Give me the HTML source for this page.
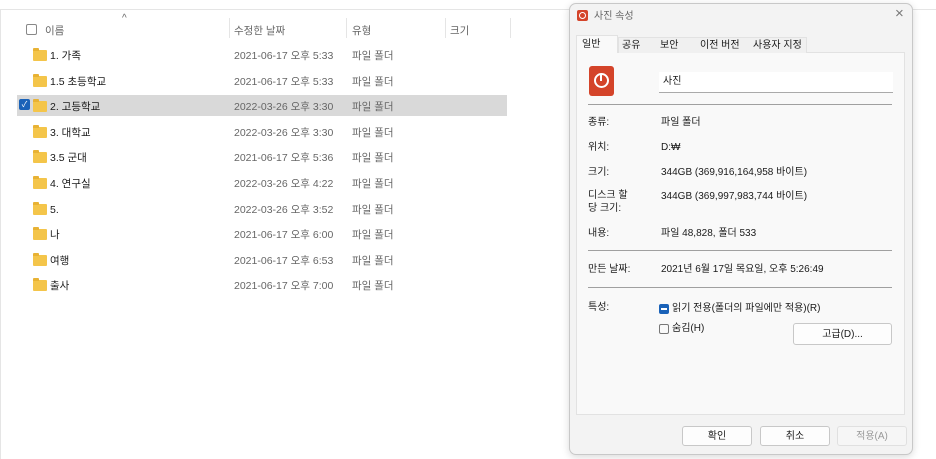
<!DOCTYPE html>
<html><head><meta charset="utf-8"><style>
*{margin:0;padding:0;box-sizing:border-box}
body{width:936px;height:459px;background:#fff;position:relative;overflow:hidden;font-family:"Liberation Sans","Noto Sans CJK KR",sans-serif;font-size:10.5px;color:#1a1a1a}
.a{position:absolute;white-space:nowrap;line-height:18px}
.g{color:#666}
.d{font-size:10px}
.fold{position:absolute;width:14px;height:11px;background:#f4c54a;border-radius:1px}
.fold:before{content:"";position:absolute;left:0;top:-2px;width:6px;height:3px;background:#e8b234;border-radius:1px 1px 0 0}
.vl{position:absolute;top:18px;width:1px;height:20px;background:#e5e5e5}
.sep{position:absolute;left:588px;width:304px;height:1px;background:#a0a0a0}
.btn{position:absolute;height:20px;border:1px solid #c8c8c8;border-radius:3px;background:#fdfdfd;text-align:center;line-height:19px;font-size:10px}
</style></head><body>
<div class="a" style="left:0;top:9px;width:936px;height:1px;background:#e5e5e5"></div>
<div class="a" style="left:0;top:10px;width:1px;height:449px;background:#e5e5e5"></div>
<div class="a" style="left:26px;top:24px;width:11px;height:11px;border:1px solid #888;border-radius:2px"></div>
<div class="a g" style="left:45px;top:22px">이름</div>
<div class="a g" style="left:122px;top:10px;font-size:10px">^</div>
<div class="vl" style="left:229px"></div><div class="vl" style="left:346px"></div><div class="vl" style="left:445px"></div><div class="vl" style="left:510px"></div>
<div class="a g" style="left:234px;top:22px">수정한 날짜</div>
<div class="a g" style="left:352px;top:22px">유형</div>
<div class="a g" style="left:450px;top:22px">크기</div>
<div class="a" style="left:17px;top:95px;width:490px;height:21px;background:#d9d9d9"></div>
<div class="a" style="left:19px;top:99px;width:11px;height:11px;background:#1a62b8;border-radius:2px;color:#fff;font-size:8px;line-height:11px;text-align:center">✓</div>
<div id="rows"></div>
<script>
var r=[["1. 가족","2021-06-17 오후 5:33"],["1.5 초등학교","2021-06-17 오후 5:33"],["2. 고등학교","2022-03-26 오후 3:30"],["3. 대학교","2022-03-26 오후 3:30"],["3.5 군대","2021-06-17 오후 5:36"],["4. 연구실","2022-03-26 오후 4:22"],["5.","2022-03-26 오후 3:52"],["나","2021-06-17 오후 6:00"],["여행","2021-06-17 오후 6:53"],["출사","2021-06-17 오후 7:00"]];
var h="";r.forEach(function(x,i){var y=48+i*25.6;h+='<div class="fold" style="left:33px;top:'+(y+2)+'px"></div><div class="a" style="left:50px;top:'+(y-1)+'px">'+x[0]+'</div><div class="a g" style="left:234px;top:'+(y-1)+'px">'+x[1]+'</div><div class="a g" style="left:352px;top:'+(y-1)+'px">파일 폴더</div>';});
document.getElementById("rows").innerHTML=h;
</script>
<div class="a" style="left:569px;top:3px;width:344px;height:452px;background:#f3f3f3;border:1px solid #c8c8c8;border-radius:7px;box-shadow:0 2px 8px rgba(0,0,0,.15)"></div>
<div class="a" style="left:577px;top:10px;width:11px;height:11px;background:#d4442a;border-radius:2px"></div>
<div class="a" style="left:579px;top:12px;width:7px;height:7px;border:1px solid #fff;border-radius:50%"></div>
<div class="a g d" style="left:594px;top:8px">사진 속성</div>
<div class="a" style="left:895px;top:5px;font-size:15px;color:#777">×</div>
<div class="a" style="left:576px;top:52px;width:329px;height:363px;background:#f9f9f9;border:1px solid #e2e2e2"></div>
<div class="a" style="left:576px;top:35px;width:42px;height:18px;background:#f9f9f9;border:1px solid #e2e2e2;border-bottom:none"></div>
<div class="a" style="left:618px;top:37px;width:189px;height:16px;background:#f0f0f0;border:1px solid #e2e2e2;border-bottom:none"></div>
<div class="a d" style="left:582px;top:36px">일반</div>
<div class="a d" style="left:622px;top:37px">공유</div>
<div class="a d" style="left:660px;top:37px">보안</div>
<div class="a d" style="left:700px;top:37px">이전 버전</div>
<div class="a d" style="left:753px;top:37px">사용자 지정</div>
<div class="a" style="left:589px;top:66px;width:25px;height:30px;background:#d4442a;border-radius:3px"></div>
<div class="a" style="left:594px;top:73px;width:15px;height:15px;border:2px solid #fff;border-radius:50%"></div>
<div class="a" style="left:600px;top:74px;width:2px;height:7px;background:#fff"></div>
<div class="a d" style="left:659px;top:72px;width:234px;height:21px;background:#fff;border-bottom:1px solid #aaa;padding:1px 4px">사진</div>
<div class="sep" style="top:104px"></div>
<div class="a d" style="left:588px;top:114px">종류:</div><div class="a d" style="left:661px;top:114px">파일 폴더</div>
<div class="a d" style="left:588px;top:139px">위치:</div><div class="a d" style="left:661px;top:139px">D:₩</div>
<div class="a d" style="left:588px;top:164px">크기:</div><div class="a d" style="left:661px;top:164px">344GB (369,916,164,958 바이트)</div>
<div class="a d" style="left:588px;top:189px;line-height:13px">디스크 할<br>당 크기:</div><div class="a d" style="left:661px;top:188px">344GB (369,997,983,744 바이트)</div>
<div class="a d" style="left:588px;top:225px">내용:</div><div class="a d" style="left:661px;top:225px">파일 48,828, 폴더 533</div>
<div class="sep" style="top:250px"></div>
<div class="a d" style="left:588px;top:261px">만든 날짜:</div><div class="a d" style="left:661px;top:261px">2021년 6월 17일 목요일, 오후 5:26:49</div>
<div class="sep" style="top:287px"></div>
<div class="a d" style="left:588px;top:299px">특성:</div>
<div class="a" style="left:659px;top:304px;width:10px;height:10px;background:#1a62b8;border-radius:2px"></div>
<div class="a" style="left:661px;top:308px;width:6px;height:2px;background:#fff"></div>
<div class="a d" style="left:672px;top:300px">읽기 전용(폴더의 파일에만 적용)(R)</div>
<div class="a" style="left:659px;top:324px;width:10px;height:10px;border:1px solid #777;border-radius:2px"></div>
<div class="a d" style="left:672px;top:320px">숨김(H)</div>
<div class="btn" style="left:793px;top:323px;width:99px;height:22px;line-height:21px">고급(D)...</div>
<div class="btn" style="left:682px;top:426px;width:70px">확인</div>
<div class="btn" style="left:760px;top:426px;width:70px">취소</div>
<div class="btn" style="left:837px;top:426px;width:70px;color:#999;border-color:#e0e0e0;background:#f6f6f6">적용(A)</div>
</body></html>
